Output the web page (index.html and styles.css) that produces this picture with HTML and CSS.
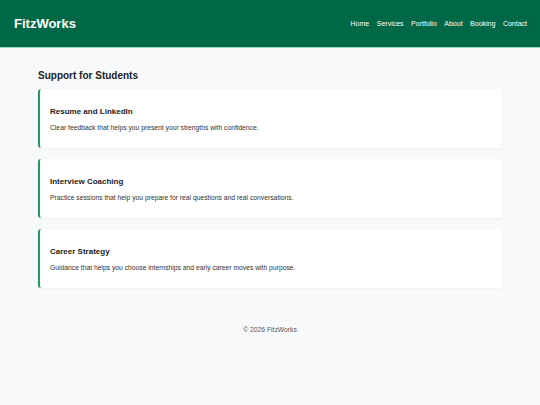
FILE: index.html
```html
<!DOCTYPE html>
<html lang="en">
<head>
    <meta charset="UTF-8">
    <title>FitzWorks - Support for Students</title>
    <meta name="viewport" content="width=device-width, initial-scale=1.0">
    <link rel="stylesheet" href="styles.css">
</head>
<body>

<header class="site-header">
    <div class="logo">FitzWorks</div>
    <nav class="main-nav">
        <a href="#">Home</a>
        <a href="#">Services</a>
        <a href="#">Portfolio</a>
        <a href="#">About</a>
        <a href="#">Booking</a>
        <a href="#">Contact</a>
    </nav>
</header>

<main class="content">
    <h2>Support for Students</h2>

    <div class="card">
        <h3>Resume and LinkedIn</h3>
        <p>Clear feedback that helps you present your strengths with confidence.</p>
    </div>
    <div class="card">
        <h3>Interview Coaching</h3>
        <p>Practice sessions that help you prepare for real questions and real conversations.</p>
    </div>
    <div class="card">
        <h3>Career Strategy</h3>
        <p>Guidance that helps you choose internships and early career moves with purpose.</p>
    </div>
</main>

<footer class="site-footer">
    <p>&copy; 2026 FitzWorks</p>
</footer>

</body>
</html>
```

FILE: styles.css
```css
* { box-sizing: border-box; }
:root {
    --green: #006847;
    --accent: #1b9e5f;
    --bg-color: #f8f9fa;
}
body {
    margin: 0px;
    background-color: var(--bg-color);
    font-family: "Liberation Sans", Arial, sans-serif;
    color: #333;
}

.site-header {
    height: 48px;
    padding: 0 13px 0 14px;
    background-color: var(--green);
    border-bottom: 1px solid #9ad6b9;
    display: flex;
    align-items: center;
    justify-content: space-between;
}
.logo {
    color: #fff;
    font-size: 13px;
    font-weight: bold;
}
.main-nav {
    display: flex;
    gap: 7.5px;
}
.main-nav a {
    color: #fff;
    font-size: 7px;
    text-decoration: none;
}

.content {
    padding: 22px 38px 0 38px;
}
.content h2 {
    margin: 0 0 8px 0;
    font-size: 10px;
    color: #222;
}

.card {
    margin-bottom: 11px;
    padding: 18px 12px 15px 10px;
    background-color: #fff;
    border-left: 2px solid var(--accent);
    border-radius: 3px;
    box-shadow: 0 1px 3px rgba(0, 0, 0, 0.04);
}
.card h3 {
    margin: 0 0 7px 0;
    font-size: 8px;
    color: #222;
}
.card p {
    margin: 0;
    font-size: 6.75px;
    line-height: 1.5;
    color: #333;
}

.site-footer {
    padding: 27px 0;
    text-align: center;
}
.site-footer p {
    margin: 0;
    font-size: 6.75px;
    color: #555;
}
```
